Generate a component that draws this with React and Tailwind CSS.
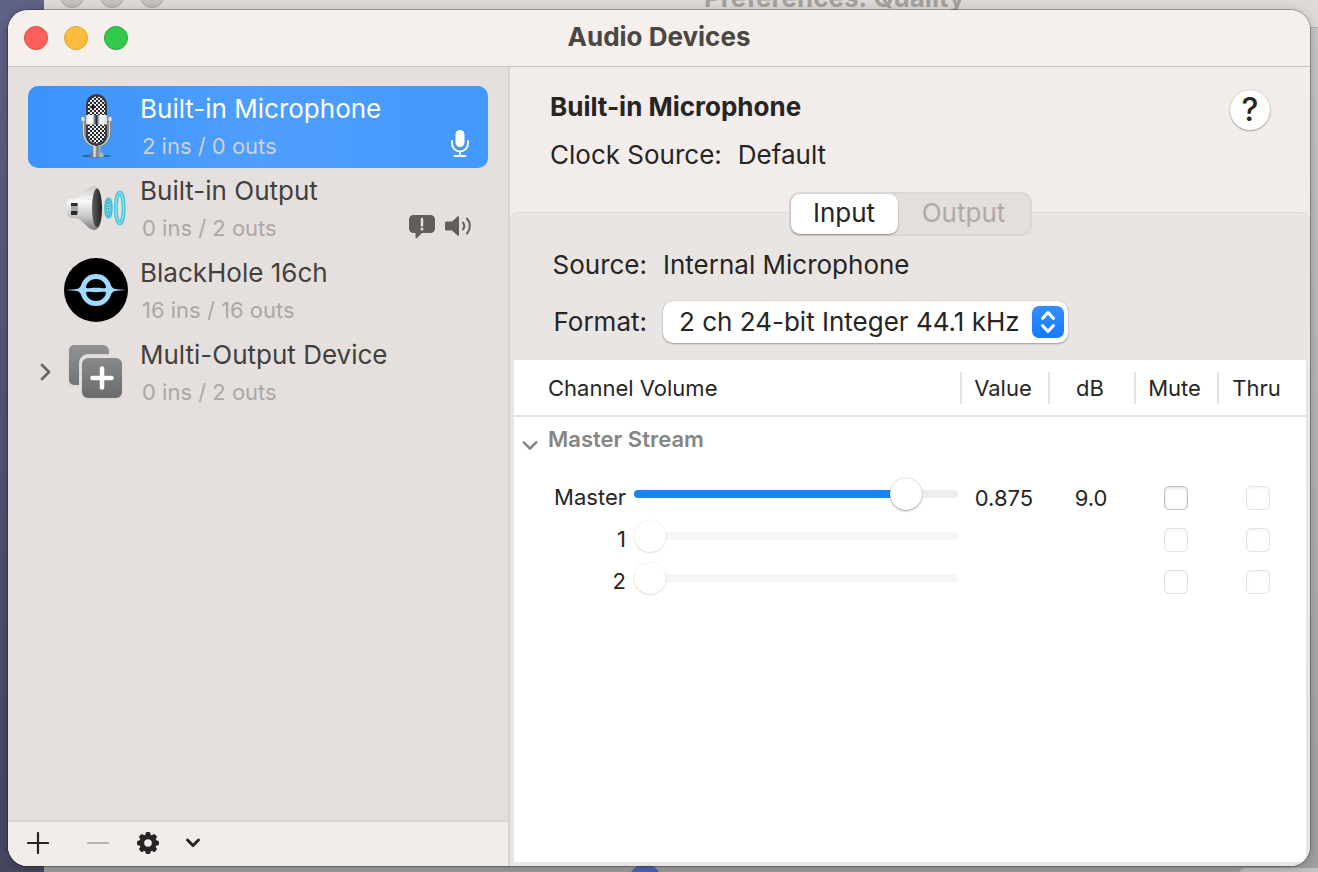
import React, { useState } from 'react'

const devices = [
  { id: 'mic', name: 'Built-in Microphone', io: '2 ins / 0 outs', Icon: RetroMicIcon },
  { id: 'out', name: 'Built-in Output', io: '0 ins / 2 outs', Icon: LoudspeakerIcon },
  { id: 'blackhole', name: 'BlackHole 16ch', io: '16 ins / 16 outs', Icon: BlackHoleIcon },
  { id: 'multi', name: 'Multi-Output Device', io: '0 ins / 2 outs', Icon: MultiOutputIcon, expandable: true },
]

const channels = [
  { label: 'Master', level: 0.875, value: '0.875', db: '9.0', enabled: true },
  { label: '1', level: 0, value: '', db: '', enabled: false },
  { label: '2', level: 0, value: '', db: '', enabled: false },
]

function RetroMicIcon() {
  return (
    <svg width="64" height="64" viewBox="0 0 64 64" fill="none" aria-hidden="true">
      <defs>
        <pattern id="mesh" width="4" height="4" patternUnits="userSpaceOnUse">
          <rect width="4" height="4" fill="#1c1c1e" />
          <circle cx="1" cy="1" r="1.15" fill="#f4f4f4" />
          <circle cx="3" cy="3" r="1.15" fill="#f4f4f4" />
        </pattern>
        <linearGradient id="band" x1="22" x2="43" y1="0" y2="0" gradientUnits="userSpaceOnUse">
          <stop offset="0" stopColor="#cfd3d6" />
          <stop offset=".15" stopColor="#fff" />
          <stop offset=".32" stopColor="#f3f5f6" />
          <stop offset=".4" stopColor="#7d8b94" />
          <stop offset=".5" stopColor="#22313c" />
          <stop offset=".6" stopColor="#a5afb5" />
          <stop offset=".68" stopColor="#fff" />
          <stop offset="1" stopColor="#d5d9dc" />
        </linearGradient>
        <linearGradient id="chrome" x1="28" x2="37" y1="0" y2="0" gradientUnits="userSpaceOnUse">
          <stop offset="0" stopColor="#6f7377" />
          <stop offset=".3" stopColor="#e8e8e8" />
          <stop offset=".55" stopColor="#777b7f" />
          <stop offset="1" stopColor="#b9bcbe" />
        </linearGradient>
      </defs>
      <ellipse cx="32.500" cy="62" rx="15" ry="1.500" fill="#1f3f66" opacity=".55" />
      <path d="M19.500 26v12c0 8 5.500 14 13 14s13-6 13-14V26" stroke="#6e7a86" strokeWidth="3" />
      <path d="M19.500 26v12c0 8 5.500 14 13 14s13-6 13-14V26" stroke="#d3d8dc" strokeWidth="1.400" />
      <path d="M28.500 52h8v6l3 2v3h-14v-3l3-2z" fill="url(#chrome)" />
      <rect x="22" y="0" width="21" height="52" rx="10.500" fill="#3a3b3e" />
      <rect x="24" y="2.500" width="17" height="47" rx="8.500" fill="url(#mesh)" />
      <rect x="22" y="21" width="21" height="9.500" fill="url(#band)" />
      <rect x="17" y="22.500" width="4" height="5" rx="1.500" fill="#dfe2e4" stroke="#76808a" strokeWidth=".6" />
      <rect x="44" y="22.500" width="4" height="5" rx="1.500" fill="#dfe2e4" stroke="#76808a" strokeWidth=".6" />
      <circle cx="29" cy="13" r="2" fill="#1c1c1e" />
    </svg>
  )
}

function LoudspeakerIcon() {
  return (
    <svg width="64" height="64" viewBox="0 -1 64 64" fill="none" aria-hidden="true">
      <defs>
        <linearGradient id="horn" x1="0" x2="0" y1="8" y2="54" gradientUnits="userSpaceOnUse">
          <stop offset="0" stopColor="#c4c4c4" />
          <stop offset=".35" stopColor="#fafafa" />
          <stop offset=".7" stopColor="#c2c3c5" />
          <stop offset="1" stopColor="#77797c" />
        </linearGradient>
        <linearGradient id="cone" x1="27" x2="38" y1="0" y2="0" gradientUnits="userSpaceOnUse">
          <stop offset="0" stopColor="#5f5f5f" />
          <stop offset=".5" stopColor="#444" />
          <stop offset="1" stopColor="#1c1c1c" />
        </linearGradient>
      </defs>
      <path d="M6 21.500h9v19.500H6c-4.500-2-4.500-17.500 0-19.500z" fill="url(#horn)" />
      <path d="M7 26h9v3H7z" fill="#2a2b2e" />
      <path d="M7 29h9v5H7z" fill="#a5a7aa" />
      <path d="M7 34h9v4H7z" fill="#2a2b2e" />
      <path d="M12 21C20 19 23 9 30.500 9c5 0 8.500 10 8.500 22s-3.500 22-8.500 22C23 53 20 43 12 41c2.500-6 2.500-14 0-20z" fill="url(#horn)" />
      <ellipse cx="33" cy="31" rx="5" ry="19.500" fill="url(#cone)" />
      <ellipse cx="44.500" cy="31" rx="2.800" ry="9.300" fill="#a5d5dc" stroke="#4bc3d8" strokeWidth="3" />
      <path d="M44.500 25v12" stroke="#4aa6b8" strokeWidth="1.500" strokeDasharray="2 1" />
      <ellipse cx="55.800" cy="31" rx="3.900" ry="15.300" stroke="#45c3d8" strokeWidth="3.800" />
      <ellipse cx="55.800" cy="31" rx="3.900" ry="15.300" stroke="#8be2ee" strokeWidth="1.400" />
    </svg>
  )
}

function BlackHoleIcon() {
  return (
    <svg width="64" height="64" viewBox="0 0 64 64" fill="none" aria-hidden="true">
      <circle cx="32" cy="32" r="32" fill="#000" />
      <path
        d="M2 32l9-.8c3 0 5-1.500 6-3.700C18.800 20.800 24.500 16 32 16s13.200 4.800 15 11.500c1 2.200 3 3.700 6 3.700l9 .8-9 .8c-3 0-5 1.500-6 3.700C45.200 43.200 39.500 48 32 48s-13.200-4.800-15-11.500c-1-2.200-3-3.700-6-3.700z"
        fill="#a0dcff"
      />
      <path d="M22 29c.8-4.600 5-8 10-8s9.200 3.400 10 8c.3 1.500-2 1.300-3.500 1.200-4.500-.6-8.500-.6-13 0-1.500.1-3.800.3-3.500-1.200z" fill="#000" />
      <path d="M22 35c.8 4.600 5 8 10 8s9.200-3.400 10-8c.3-1.500-2-1.300-3.500-1.200-4.500.6-8.500.6-13 0-1.500-.1-3.800-.3-3.500 1.200z" fill="#000" />
    </svg>
  )
}

function MultiOutputIcon() {
  return (
    <svg width="64" height="64" viewBox="0 -1 64 64" fill="none" aria-hidden="true" className="drop-shadow-xs">
      <defs>
        <linearGradient id="tile" x1="0" x2="0" y1="4" y2="57" gradientUnits="userSpaceOnUse">
          <stop offset="0" stopColor="#929295" />
          <stop offset="1" stopColor="#696b6c" />
        </linearGradient>
      </defs>
      <path d="M10 4h29a6 6 0 0 1 6 6v3H24a9 9 0 0 0-9 9v22h-5a5 5 0 0 1-5-5V9a5 5 0 0 1 5-5z" fill="url(#tile)" />
      <rect x="18" y="17" width="40" height="40" rx="6" fill="url(#tile)" />
      <path d="M38 27.500v19M28.500 37h19" stroke="#fff" strokeWidth="4.500" strokeLinecap="round" />
    </svg>
  )
}

function Chevron({ direction, className }) {
  return (
    <svg
      width="18"
      height="18"
      viewBox="0 0 18 18"
      fill="none"
      stroke="currentColor"
      strokeWidth="2.800"
      strokeLinecap="round"
      strokeLinejoin="round"
      className={className}
      aria-hidden="true"
    >
      <path d={direction === 'right' ? 'M6 2l7 7-7 7' : 'M2 6l7 7 7-7'} />
    </svg>
  )
}

function DefaultInputBadge() {
  return (
    <svg width="20" height="28" viewBox="0 0 20 28" fill="none" stroke="#fff" strokeWidth="2" strokeLinecap="round" aria-hidden="true">
      <rect x="5.500" y="0" width="9" height="17" rx="4.500" fill="#fff" stroke="none" />
      <path d="M2 11v2.500a8 8 0 0 0 16 0V11M10 21.500v4M4.500 26h11" />
    </svg>
  )
}

function DefaultOutputBadges() {
  return (
    <>
      <svg width="26" height="28" viewBox="0 0 26 28" aria-hidden="true">
        <path d="M4.500 3h17A4.500 4.500 0 0 1 26 7.500v9a4.500 4.500 0 0 1-4.500 4.500H13l-5 5c-.8.700-1.500.4-1.500-.6V21h-2A4.500 4.500 0 0 1 0 16.500v-9A4.500 4.500 0 0 1 4.500 3z" fill="#635e5b" />
        <path d="M13 7v6.500" stroke="#e5e0dd" strokeWidth="2.400" strokeLinecap="round" />
        <circle cx="13" cy="17" r="1.500" fill="#e5e0dd" />
      </svg>
      <svg width="27" height="28" viewBox="0 0 27 28" fill="none" stroke="#635e5b" strokeWidth="2" strokeLinecap="round" aria-hidden="true">
        <path d="M2 9.500h5l5.500-5c.8-.6 1.500-.3 1.500.6v17.800c0 .9-.7 1.200-1.500.6l-5.500-5H2C.5 18.500 0 18 0 16.500v-5c0-1.500.5-2 2-2z" fill="#635e5b" stroke="none" />
        <path d="M18 10.500c1.500 2 1.500 5 0 7" />
        <path d="M22 6.500c3.800 4.500 3.800 10.500 0 15" />
      </svg>
    </>
  )
}

function GearIcon() {
  return (
    <svg width="24" height="24" viewBox="0 0 24 24" aria-hidden="true">
      <g fill="#262424">
        <rect x="9.500" y="1" width="5" height="22" rx="1.500" />
        <rect x="9.500" y="1" width="5" height="22" rx="1.500" transform="rotate(45 12 12)" />
        <rect x="9.500" y="1" width="5" height="22" rx="1.500" transform="rotate(90 12 12)" />
        <rect x="9.500" y="1" width="5" height="22" rx="1.500" transform="rotate(135 12 12)" />
        <circle cx="12" cy="12" r="8.700" />
      </g>
      <circle cx="12" cy="12" r="3.800" fill="#f2edea" />
    </svg>
  )
}

// Windows and wallpaper that show around the edges of the front window
function Backdrop() {
  return (
    <div className="absolute inset-0 overflow-hidden bg-linear-to-b from-[#5f6385] to-[#44475f]" aria-hidden="true">
      <div className="absolute inset-y-0 right-0 left-11 bg-linear-to-b from-[#c9c9c9] to-[#a0a0a0]">
        <div className="h-7 border-b border-[#b3b0ae] bg-[#dedad7]" />
        <div className="absolute -top-4 left-4 flex gap-4">
          <span className="size-6 rounded-full border border-[#a9a5a2] bg-[#c6c2bf]" />
          <span className="size-6 rounded-full border border-[#a9a5a2] bg-[#c6c2bf]" />
          <span className="size-6 rounded-full border border-[#a9a5a2] bg-[#c6c2bf]" />
        </div>
        <p className="absolute -top-5 left-[660px] text-[26px] leading-9 font-bold whitespace-nowrap text-[#a7a19d]">
          Preferences: Quality
        </p>
        <div className="absolute -bottom-6 left-[585px] size-8 rounded-full bg-[#4a68b5]" />
        <div className="absolute -bottom-3 right-0 h-4 w-20 rounded-tl-lg bg-[#c4c4c4]" />
      </div>
    </div>
  )
}

function DeviceRow({ device, selected, onSelect }) {
  const { Icon } = device
  return (
    <li>
      <button
        type="button"
        onClick={onSelect}
        aria-pressed={selected}
        className={`flex h-[82px] w-full items-center rounded-[10px] pl-3 pr-4 text-left ${
          selected ? 'bg-linear-to-r from-[#3b93fb] via-[#4e9efd] to-[#4398fd] text-white' : 'text-[#423f3d]'
        }`}
      >
        <span className="flex shrink-0 items-center pb-0.5">
          <span className="w-6">
            {device.expandable && <Chevron direction="right" className="-ml-1 text-[#6a6664]" />}
          </span>
          <Icon />
        </span>
        <span className="ml-3 flex min-w-0 flex-1 flex-col gap-px pt-px">
          <span className="truncate text-[26px] leading-9">{device.name}</span>
          <span className={`pl-0.5 text-[22px] leading-9 ${selected ? 'text-[#cdd0d6]' : 'text-[#aca8a6]'}`}>
            {device.io}
          </span>
        </span>
        <span className="flex gap-2.5 self-end pb-[10px]">
          {device.id === 'mic' && <span className="pr-0.5"><DefaultInputBadge /></span>}
          {device.id === 'out' && <DefaultOutputBadges />}
        </span>
      </button>
    </li>
  )
}

function Sidebar({ current, onSelect }) {
  return (
    <aside className="flex w-[502px] shrink-0 flex-col border-r-2 border-[#d9d4d1] bg-[#e5e0dd]">
      <ul className="flex-1 px-5 pt-[19px]">
        {devices.map(device => (
          <DeviceRow
            key={device.id}
            device={device}
            selected={device.id === current}
            onSelect={() => onSelect(device.id)}
          />
        ))}
      </ul>
      <div className="flex h-[46px] items-center border-t-2 border-[#d9d4d1] bg-[#f2edea] pb-0.5 pl-4 text-[#262424]">
        <button type="button" aria-label="Add device" className="flex size-7 items-center justify-center">
          <svg width="22" height="22" viewBox="0 0 22 22" stroke="currentColor" strokeWidth="2.200" strokeLinecap="round" aria-hidden="true">
            <path d="M11 1v20M1 11h20" />
          </svg>
        </button>
        <button type="button" aria-label="Remove device" disabled className="ml-8 flex size-7 items-center justify-center text-[#b8b3b0]">
          <svg width="22" height="22" viewBox="0 0 22 22" stroke="currentColor" strokeWidth="2.200" strokeLinecap="round" aria-hidden="true">
            <path d="M1 11h20" />
          </svg>
        </button>
        <button type="button" aria-label="Device actions" className="ml-6 flex h-7 items-center gap-6">
          <GearIcon />
          <svg width="18" height="18" viewBox="0 0 18 18" fill="none" stroke="currentColor" strokeWidth="3" strokeLinecap="round" strokeLinejoin="round" aria-hidden="true">
            <path d="M3.500 6L9 11.500 14.500 6" />
          </svg>
        </button>
      </div>
    </aside>
  )
}

function Slider({ label, level, enabled }) {
  const fill = enabled ? 'bg-[#1a84ff]' : 'bg-transparent'
  return (
    <div className="relative flex h-8 flex-1 items-center">
      <div className={`h-2 w-full overflow-hidden rounded-full ${enabled ? 'bg-[#ededed]' : 'bg-[#f6f6f6]'}`}>
        <div className={`h-full ${fill}`} style={{ width: `${level * 100}%` }} />
      </div>
      <input
        type="range"
        min="0"
        max="1"
        step="0.001"
        defaultValue={level}
        disabled={!enabled}
        aria-label={`${label} volume`}
        className={`absolute inset-0 h-8 w-full appearance-none bg-transparent [&::-webkit-slider-thumb]:size-8 [&::-webkit-slider-thumb]:appearance-none [&::-webkit-slider-thumb]:rounded-full [&::-webkit-slider-thumb]:bg-white ${
          enabled
            ? '[&::-webkit-slider-thumb]:shadow-[0_1px_2px_rgba(0,0,0,0.35),0_0_1px_rgba(0,0,0,0.3)]'
            : '[&::-webkit-slider-thumb]:shadow-[0_1px_2px_rgba(0,0,0,0.12),0_0_1px_rgba(0,0,0,0.15)]'
        }`}
      />
    </div>
  )
}

function Checkbox({ label, enabled }) {
  return (
    <input
      type="checkbox"
      aria-label={label}
      disabled={!enabled}
      className={`block size-6 appearance-none rounded-[5px] border bg-white checked:bg-[#1a84ff] ${
        enabled
          ? 'border-[#c2c2c2] shadow-[inset_0_1px_3px_rgba(0,0,0,0.16)]'
          : 'border-[#e2e2e2] shadow-[inset_0_1px_3px_rgba(0,0,0,0.06)]'
      }`}
    />
  )
}

function HeaderCell({ children }) {
  return (
    <th scope="col" className="p-0 font-normal">
      <div className="flex h-8 items-center justify-center border-l-2 border-[#e3e3e3] pr-1">{children}</div>
    </th>
  )
}

function ChannelTable() {
  return (
    <div className="flex-1 bg-white">
      <table className="w-full table-fixed border-collapse text-[22px] leading-7 text-[#262626]">
        <colgroup>
          <col />
          <col className="w-[88px]" />
          <col className="w-[86px]" />
          <col className="w-[83px]" />
          <col className="w-[89px]" />
        </colgroup>
        <thead>
          <tr className="h-14 border-b-2 border-[#e3e3e3]">
            <th scope="col" className="py-0 pr-0 pl-[34px] text-left font-normal">Channel Volume</th>
            <HeaderCell>Value</HeaderCell>
            <HeaderCell>dB</HeaderCell>
            <HeaderCell>Mute</HeaderCell>
            <HeaderCell><span className="pr-2">Thru</span></HeaderCell>
          </tr>
        </thead>
        <tbody>
          <tr className="h-[61px]">
            <th colSpan={5} scope="colgroup" className="px-0 pt-2 pb-0 text-left align-top font-semibold text-[#858585]">
              <button type="button" className="flex items-start gap-2">
                <Chevron direction="down" className="mt-3 ml-2 size-4" />
                <span className="pl-0.5">Master Stream</span>
              </button>
            </th>
          </tr>
          {channels.map(({ label, level, value, db, enabled }) => (
            <tr key={label} className="h-[42px]">
              <th scope="row" className="py-0 pr-0.5 pl-0 font-normal">
                <div className="flex items-center gap-2">
                  <span className="w-28 shrink-0 pb-0.5 text-right">{label}</span>
                  <div className="flex flex-1 pb-2">
                    <Slider label={label} level={level} enabled={enabled} />
                  </div>
                </div>
              </th>
              <td className="p-0 text-center">{value}</td>
              <td className="p-0 text-center">{db}</td>
              <td className="p-0">
                <div className="flex justify-center"><Checkbox label={`Mute ${label}`} enabled={enabled} /></div>
              </td>
              <td className="py-0 pr-2 pl-0">
                <div className="flex justify-center"><Checkbox label={`Thru ${label}`} enabled={false} /></div>
              </td>
            </tr>
          ))}
        </tbody>
      </table>
    </div>
  )
}

function DevicePanel({ device }) {
  return (
    <main className="flex min-w-0 flex-1 flex-col bg-[#f2edea] text-[26px] leading-8 text-[#262424]">
      <header className="flex h-[145px] items-start justify-between pt-6 pr-10 pl-10">
        <div className="flex flex-col gap-4">
          <h2 className="font-bold">{device.name}</h2>
          <p className="flex gap-4">
            <span>Clock Source:</span>
            <span>Default</span>
          </p>
        </div>
        <button
          type="button"
          aria-label="Help"
          className="-mt-px flex size-10 items-center justify-center rounded-full bg-white text-[32px] font-medium shadow-[0_1px_2px_rgba(0,0,0,0.3),0_0_1px_rgba(0,0,0,0.3)]"
        >
          ?
        </button>
      </header>
      <section className="flex flex-1 flex-col rounded-t-lg border-t border-[#dedad7] bg-[#e9e5e2] px-1 pb-1">
        <div role="tablist" className="-mt-[21px] flex h-[44px] self-center rounded-[11px] border-2 border-[#dcd7d4] bg-[#e4dfdc]">
          <button
            type="button"
            role="tab"
            aria-selected="true"
            className="w-[107px] rounded-[9px] bg-white pb-0.5 shadow-[0_1px_2px_rgba(0,0,0,0.35)]"
          >
            Input
          </button>
          <button type="button" role="tab" aria-selected="false" className="w-[132px] pb-0.5 text-[#aeaaa7]">
            Output
          </button>
        </div>
        <div className="mt-[11px] mb-[17px] grid grid-cols-[133px_1fr] items-center gap-x-4 gap-y-[18px] text-left">
          <span className="flex h-9 items-center justify-end">Source:</span>
          <span>Internal Microphone</span>
          <label htmlFor="format" className="text-right">Format:</label>
          <div className="relative w-[405px]">
            <select
              id="format"
              className="block h-[42px] w-full appearance-none rounded-[10px] bg-white pr-12 pl-4 shadow-[0_1px_2px_rgba(0,0,0,0.3),0_0_1px_rgba(0,0,0,0.3)]"
            >
              <option>2 ch 24-bit Integer 44.1 kHz</option>
            </select>
            <span className="pointer-events-none absolute inset-y-0 right-1 my-auto flex size-8 items-center justify-center rounded-[7px] bg-linear-to-b from-[#338fff] to-[#147aff]">
              <svg width="32" height="32" viewBox="0 0 32 32" fill="none" stroke="#fff" strokeWidth="3" strokeLinecap="round" strokeLinejoin="round" aria-hidden="true">
                <path d="M10.500 12.500L16 6.500l5.500 6M10.500 19.500l5.500 6 5.500-6" />
              </svg>
            </span>
          </div>
        </div>
        <ChannelTable />
      </section>
    </main>
  )
}

export default function App() {
  const [current, setCurrent] = useState('mic')
  const device = devices.find(d => d.id === current)

  return (
    <div className="relative flex h-screen flex-col px-2 pt-[10px] pb-1.5 font-[Inter,'Liberation_Sans',sans-serif]">
      <Backdrop />
      <div className="relative flex flex-1 flex-col overflow-hidden rounded-[20px] bg-[#e9e5e2] shadow-[0_0_0_1px_rgba(0,0,0,0.25),0_2px_12px_rgba(0,0,0,0.25)]">
        <div className="grid h-[57px] grid-cols-[1fr_auto_1fr] items-center border-b border-[#c8c3c0] bg-[#f5f0ec] px-4">
          <div className="flex gap-4">
            <button type="button" aria-label="Close" className="size-6 rounded-full border border-[#e2463f] bg-[#ff5f5a]" />
            <button type="button" aria-label="Minimize" className="size-6 rounded-full border border-[#e0a033] bg-[#fdbc40]" />
            <button type="button" aria-label="Zoom" className="size-6 rounded-full border border-[#25a836] bg-[#34c84a]" />
          </div>
          <h1 className="pb-0.5 text-[26px] leading-8 font-bold text-[#494644]">Audio Devices</h1>
        </div>
        <div className="flex min-h-0 flex-1">
          <Sidebar current={current} onSelect={setCurrent} />
          <DevicePanel device={device} />
        </div>
      </div>
    </div>
  )
}
